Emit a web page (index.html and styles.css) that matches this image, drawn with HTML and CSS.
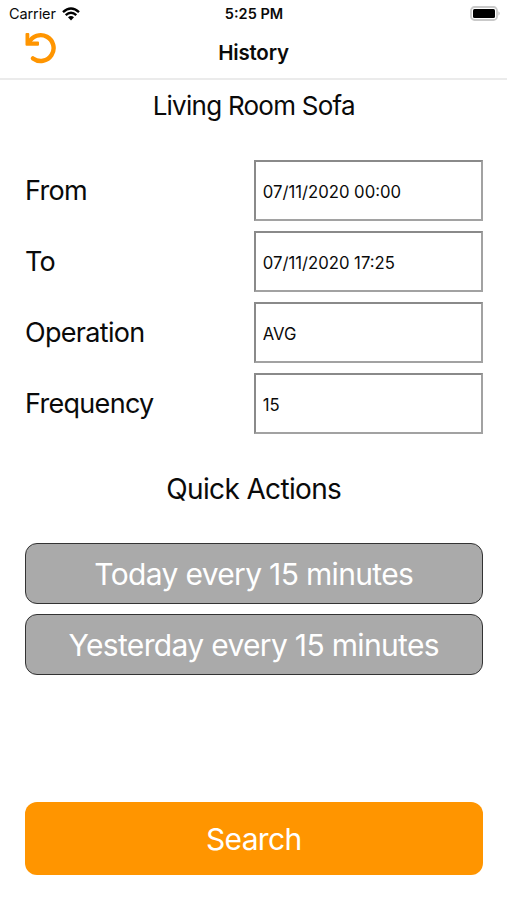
FILE: index.html
```html
<!DOCTYPE html>
<html lang="en">
  <head>
    <meta charset="UTF-8" />
    <meta name="viewport" content="width=device-width, initial-scale=1.0" />
    <title>History</title>
    <link rel="stylesheet" href="styles.css">
  </head>
  <body>
    <div class="status">
      <div class="status__carrier">
        <span>Carrier</span>
        <svg class="status__wifi" viewBox="0 0 18 14">
          <path d="M1 5.2 Q9 -2.2 17 5.2" />
          <path d="M3.7 8.1 Q9 3.4 14.3 8.1" />
          <path class="status__wifi-dot" d="M6 10.2 Q9 7.8 12 10.2 L9 13.4 Z" />
        </svg>
      </div>
      <div class="status__time">5:25 PM</div>
      <div class="status__power">
        <svg class="status__battery" viewBox="0 0 31 16">
          <rect x="1" y="1" width="26" height="13" rx="3.5" fill="#fff" stroke="#c9c9c9" stroke-width="1.8" />
          <rect x="3" y="3" width="22" height="9" rx="1.5" fill="#000" />
          <path d="M28.5 5.3 Q30.8 7.5 28.5 9.7 Z" fill="#b5b5b5" />
        </svg>
      </div>
    </div>

    <header class="nav">
      <button class="nav__back" aria-label="Back">
        <svg viewBox="0 0 32 32">
          <path class="nav__arc" d="M4 10.6 A12.9 12.9 0 1 1 8 26.4" />
          <path class="nav__head" d="M1.5 1 H3.3 Q4.3 1 4.3 2 V9.4 H13 Q14 9.4 14 10.4 V12.8 Q14 13.8 13 13.8 H1.5 Q0.5 13.8 0.5 12.8 V2 Q0.5 1 1.5 1 Z" />
        </svg>
      </button>
      <h1 class="nav__title">History</h1>
    </header>

    <main class="content">
      <h2 class="title">Living Room Sofa</h2>

      <form class="form">
        <label class="form__row">
          <span class="form__label">From</span>
          <input class="form__input" type="text" value="07/11/2020 00:00" />
        </label>
        <label class="form__row">
          <span class="form__label">To</span>
          <input class="form__input" type="text" value="07/11/2020 17:25" />
        </label>
        <label class="form__row">
          <span class="form__label">Operation</span>
          <input class="form__input" type="text" value="AVG" />
        </label>
        <label class="form__row">
          <span class="form__label">Frequency</span>
          <input class="form__input" type="text" value="15" />
        </label>
      </form>

      <h2 class="title title--actions">Quick Actions</h2>

      <div class="actions">
        <button class="button">Today every 15 minutes</button>
        <button class="button">Yesterday every 15 minutes</button>
      </div>

      <button class="button button--search">Search</button>
    </main>
  </body>
</html>
```

FILE: styles.css
```css
* {
  box-sizing: border-box;
}

body {
  margin: 0;
  height: 900px;
  display: flex;
  flex-direction: column;
  background: #fff;
  color: #0a0a0a;
  font-family: Inter, 'Liberation Sans', sans-serif;
}

button {
  font-family: inherit;
  cursor: pointer;
}

.status {
  height: 27px;
  padding: 0 6px 0 9px;
  display: grid;
  grid-template-columns: 1fr auto 1fr;
  align-items: center;
  font-size: 14.5px;
}

.status__carrier {
  display: flex;
  align-items: center;
  gap: 6px;
  letter-spacing: -0.1px;
}

.status__wifi {
  width: 18px;
  height: 14px;
  fill: none;
  stroke: #000;
  stroke-width: 2.4;
}

.status__wifi-dot {
  fill: #000;
  stroke: none;
}

.status__time {
  padding-right: 2px;
  font-weight: 600;
  font-size: 14.5px;
}

.status__power {
  display: flex;
  justify-content: flex-end;
}

.status__battery {
  width: 31px;
  height: 16px;
}

.nav {
  height: 53px;
  padding: 0 25px;
  display: grid;
  grid-template-columns: 1fr auto 1fr;
  border-bottom: 2px solid #ebebeb;
}

.nav__back {
  width: 32px;
  height: 32px;
  margin-top: 5px;
  padding: 0;
  border: 0;
  background: none;
}

.nav__back svg {
  display: block;
}

.nav__arc {
  fill: none;
  stroke: #ff9500;
  stroke-width: 4.4;
  stroke-linecap: round;
}

.nav__head {
  fill: #ff9500;
}

.nav__title {
  margin: 0;
  line-height: 52px;
  font-size: 20.5px;
  font-weight: 600;
  letter-spacing: -0.2px;
}

.content {
  flex: 1;
  padding: 0 24.5px 0 25px;
  display: flex;
  flex-direction: column;
}

.title {
  margin: 9px 0 37px;
  line-height: 34px;
  font-size: 26px;
  font-weight: 400;
  letter-spacing: -0.75px;
  text-align: center;
}

.title--actions {
  margin: 38px 0 37px;
  font-size: 28px;
  letter-spacing: -0.65px;
}

.form,
.actions {
  display: flex;
  flex-direction: column;
  gap: 10px;
}

.form__row {
  display: grid;
  grid-template-columns: 1fr 1fr;
  align-items: center;
}

.form__label {
  font-size: 27px;
  letter-spacing: -0.7px;
}

.form__input {
  width: 100%;
  height: 61px;
  padding: 2px 7px 0;
  border: 2px solid;
  border-color: #8a8a8a #a2a2a2 #a2a2a2 #8a8a8a;
  background: #fff;
  color: #0a0a0a;
  font-family: inherit;
  font-size: 16.7px;
}

.button {
  height: 61px;
  padding: 0;
  border: 1.5px solid #333;
  border-radius: 12px;
  background: #aaa;
  color: #fff;
  font-size: 30px;
  letter-spacing: -0.67px;
}

.button--search {
  height: 73px;
  margin: auto 0 25px;
  border: 0;
  background: #ff9500;
}
```
